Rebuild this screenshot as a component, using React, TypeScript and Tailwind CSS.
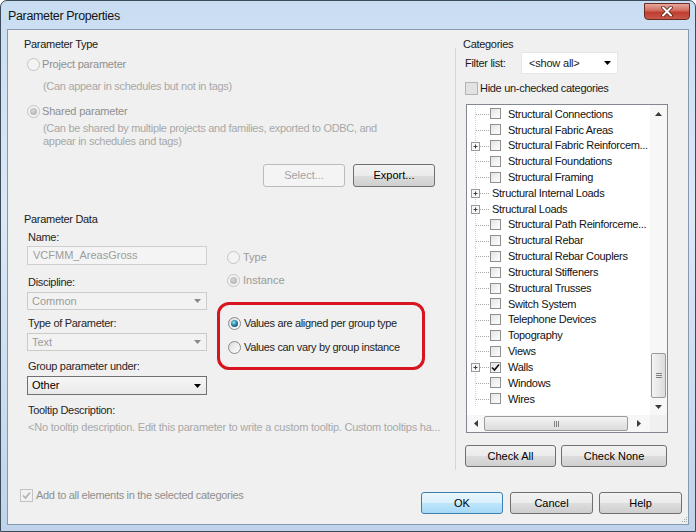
import React from "react";

type RowData = { label: string; plus?: boolean; box?: boolean; checked?: boolean };

const rows: RowData[] = [
  { label: "Structural Connections", box: true },
  { label: "Structural Fabric Areas", box: true },
  { label: "Structural Fabric Reinforcem...", plus: true, box: true },
  { label: "Structural Foundations", box: true },
  { label: "Structural Framing", box: true },
  { label: "Structural Internal Loads", plus: true },
  { label: "Structural Loads", plus: true },
  { label: "Structural Path Reinforceme...", box: true },
  { label: "Structural Rebar", box: true },
  { label: "Structural Rebar Couplers", box: true },
  { label: "Structural Stiffeners", box: true },
  { label: "Structural Trusses", box: true },
  { label: "Switch System", box: true },
  { label: "Telephone Devices", box: true },
  { label: "Topography", box: true },
  { label: "Views", box: true },
  { label: "Walls", plus: true, box: true, checked: true },
  { label: "Windows", box: true },
  { label: "Wires", box: true },
];

const Radio = ({ checked = false, disabled = false }: { checked?: boolean; disabled?: boolean }) => (
  <span
    className={`flex h-[13px] w-[13px] shrink-0 items-center justify-center rounded-full border ${
      disabled ? "border-[#c4c4c4] bg-[#f3f3f3]" : "border-[#8b8b8b] bg-[linear-gradient(135deg,#dcdcdc,#ffffff)]"
    }`}
  >
    {checked && (
      <span
        className={`h-[7px] w-[7px] rounded-full ${
          disabled
            ? "bg-[radial-gradient(circle_at_40%_40%,#d8d8d8,#a6a6a6)]"
            : "bg-[radial-gradient(circle_at_40%_35%,#8fe0f5,#1f7397_55%,#0a3a52)]"
        }`}
      />
    )}
  </span>
);

const Tick = ({ color }: { color: string }) => (
  <svg width="9" height="9" viewBox="0 0 9 9">
    <path d="M1 4.5 L3.5 7 L8 1.5" fill="none" stroke={color} strokeWidth="1.6" />
  </svg>
);

const Btn = ({ label, w, variant = "normal" }: { label: string; w: string; variant?: "normal" | "disabled" | "default" }) => {
  const look =
    variant === "disabled"
      ? "border-[#b8bcbf] bg-[#f4f4f4] text-[#a3a3a3]"
      : variant === "default"
      ? "border-[#3c7fb1] bg-[linear-gradient(to_bottom,#eaf6fd_0%,#d9f0fc_50%,#bee6fd_51%,#a7d9f5_100%)] text-black"
      : "border-[#707070] bg-[linear-gradient(to_bottom,#f2f2f2_0%,#ebebeb_50%,#dddddd_51%,#cfcfcf_100%)] text-black";
  return (
    <div className={`flex h-full items-center justify-center rounded-[3px] border text-[11px] ${look} ${w}`}>{label}</div>
  );
};

const Select = ({ value, disabled = false, h }: { value: string; disabled?: boolean; h: string }) => (
  <div
    className={`flex w-[180px] items-center justify-between border pl-[4px] pr-[5px] text-[11px] ${h} ${
      disabled ? "border-[#cbcbcb] bg-[#f2f2f2] text-[#9c9c9c]" : "border-[#707070] bg-[linear-gradient(to_bottom,#f6f6f6,#e9e9e9)] text-black"
    }`}
  >
    <span>{value}</span>
    <svg width="7" height="4" viewBox="0 0 7 4">
      <polygon points="0,0 7,0 3.5,4" fill={disabled ? "#8a8a8a" : "#000"} />
    </svg>
  </div>
);

const Gutter = ({ plus }: { plus?: boolean }) => (
  <svg width="22" height="16" className="shrink-0">
    <line x1="8.5" y1="0" x2="8.5" y2="16" stroke="#d2d2d2" strokeDasharray="1 1" />
    <line x1="9" y1="8.5" x2="22" y2="8.5" stroke="#a8a8a8" strokeDasharray="1 1" />
    {plus && (
      <g>
        <rect x="4.5" y="4.5" width="8" height="8" fill="#f8f8f8" stroke="#9a9a9a" />
        <line x1="6.5" y1="8.5" x2="10.5" y2="8.5" stroke="#404040" />
        <line x1="8.5" y1="6.5" x2="8.5" y2="10.5" stroke="#404040" />
      </g>
    )}
  </svg>
);

const TreeRow = ({ row }: { row: RowData }) => (
  <div className="flex h-[15.83px] items-center whitespace-nowrap">
    <Gutter plus={row.plus} />
    {row.box ? (
      <>
        <span className="ml-[1px] flex h-[11px] w-[11px] shrink-0 items-center justify-center border border-[#8f8f8f] bg-[linear-gradient(135deg,#e4e4e4,#ffffff)]">
          {row.checked && <Tick color="#111" />}
        </span>
        <span className="ml-[7px] text-[11px] tracking-[-0.3px] text-[#111]">{row.label}</span>
      </>
    ) : (
      <span className="ml-[3px] text-[11px] tracking-[-0.3px] text-[#111]">{row.label}</span>
    )}
  </div>
);

const Arrow = ({ dir }: { dir: "up" | "down" | "left" | "right" }) => {
  const pts = { up: "0,4 7,4 3.5,0", down: "0,0 7,0 3.5,4", left: "4,0 4,7 0,3.5", right: "0,0 0,7 4,3.5" }[dir];
  const vertical = dir === "up" || dir === "down";
  return (
    <svg width={vertical ? 7 : 4} height={vertical ? 4 : 7}>
      <polygon points={pts} fill="#3a3a3a" />
    </svg>
  );
};

const CategoryTree = () => (
  <div className="ml-[3px] mt-[9px] flex h-[329px] w-[202px] flex-col border border-[#828790] bg-white">
    <div className="flex h-[310px]">
      <div className="w-[183px] overflow-hidden pt-[1px]">
        {rows.map((r) => (
          <TreeRow key={r.label} row={r} />
        ))}
      </div>
      <div className="flex w-[17px] flex-col bg-[#f7f7f7]">
        <div className="flex h-[17px] items-center justify-center">
          <Arrow dir="up" />
        </div>
        <div className="flex-1">
          <div className="mx-[1px] mt-[231px] flex h-[45px] items-center justify-center rounded-[2px] border border-[#9a9a9a] bg-[linear-gradient(to_right,#f4f4f4,#dcdcdc)]">
            <div className="flex flex-col gap-[1px]">
              <span className="h-px w-[6px] bg-[#808080]" />
              <span className="h-px w-[6px] bg-[#808080]" />
              <span className="h-px w-[6px] bg-[#808080]" />
            </div>
          </div>
        </div>
        <div className="flex h-[17px] items-center justify-center">
          <Arrow dir="down" />
        </div>
      </div>
    </div>
    <div className="flex h-[17px]">
      <div className="flex w-[183px] bg-[#f7f7f7]">
        <div className="flex w-[17px] items-center justify-center">
          <Arrow dir="left" />
        </div>
        <div className="my-[1px] flex w-[144px] items-center justify-center rounded-[2px] border border-[#9a9a9a] bg-[linear-gradient(to_bottom,#f4f4f4,#dcdcdc)]">
          <div className="flex gap-[1px]">
            <span className="h-[6px] w-px bg-[#808080]" />
            <span className="h-[6px] w-px bg-[#808080]" />
            <span className="h-[6px] w-px bg-[#808080]" />
          </div>
        </div>
        <div className="flex flex-1 items-center justify-center">
          <Arrow dir="right" />
        </div>
      </div>
      <div className="w-[17px] bg-[#f0f0f0]" />
    </div>
  </div>
);

export default function App() {
  return (
    <div className="font-['Liberation_Sans',Arial,sans-serif] flex h-[532px] w-[696px] flex-col overflow-hidden rounded-t-[7px] border border-[#3c4a5a] bg-[linear-gradient(to_bottom,#c9ddf2,#dbe8f6_40%,#bfd4eb)]">
      {/* title bar */}
      <div className="flex h-[28px] shrink-0 items-start justify-between">
        <div className="mt-[6px] pl-[7px] text-[12.5px] tracking-[-0.35px] text-[#141414]">Parameter Properties</div>
        <div className="mr-[5px] mt-[2px] flex h-[17px] w-[46px] items-center justify-center rounded-b-[4px] border border-[#6b2a24] bg-[linear-gradient(to_bottom,#e8a79c,#d06a5d_45%,#bf3d2f_55%,#c8584a)]">
          <svg width="12" height="11" viewBox="0 0 12 11">
            <path d="M2 1.5 L10 9.5 M10 1.5 L2 9.5" stroke="#5a1f19" strokeWidth="3.6" strokeLinecap="round" />
            <path d="M2 1.5 L10 9.5 M10 1.5 L2 9.5" stroke="#ffffff" strokeWidth="2" strokeLinecap="round" />
          </svg>
        </div>
      </div>

      {/* client area */}
      <div className="ml-[6px] flex h-[496px] w-[682px] flex-col border border-[#8699b1] bg-[#f0f0f0] text-[11px]">
        <div className="flex h-[445px] items-start">
          {/* left column */}
          <div className="flex w-[447px] flex-col pl-[16px]">
            <div className="mt-[7px] h-[14px] leading-[14px] tracking-[-0.3px] text-[#1a1a1a]">Parameter Type</div>
            <div className="ml-[3px] mt-[6px] flex h-[14px] items-center gap-[2px] tracking-[-0.2px] text-[#8f8f8f]">
              <Radio disabled />
              <span>Project parameter</span>
            </div>
            <div className="ml-[19px] mt-[8px] h-[14px] leading-[14px] tracking-[-0.3px] text-[#a8a8a8]">
              (Can appear in schedules but not in tags)
            </div>
            <div className="ml-[3px] mt-[11px] flex h-[14px] items-center gap-[2px] tracking-[-0.2px] text-[#8f8f8f]">
              <Radio checked disabled />
              <span>Shared parameter</span>
            </div>
            <div className="ml-[19px] mt-[4px] leading-[13px] tracking-[-0.3px] text-[#a8a8a8]">
              <div>(Can be shared by multiple projects and families, exported to ODBC, and</div>
              <div>appear in schedules and tags)</div>
            </div>
            <div className="mt-[16px] flex h-[23px] justify-end gap-[8px] pr-[20px]">
              <Btn label="Select..." w="w-[82px]" variant="disabled" />
              <Btn label="Export..." w="w-[82px]" />
            </div>

            <div className="mt-[25px] h-[14px] leading-[14px] tracking-[-0.3px] text-[#1a1a1a]">Parameter Data</div>
            <div className="flex">
              <div className="ml-[3px] flex w-[180px] flex-col">
                <div className="ml-[1px] mt-[4px] h-[14px] leading-[14px] tracking-[-0.3px] text-[#262626]">Name:</div>
                <div className="mt-[2px] flex h-[19px] items-center border border-[#cfcfcf] bg-[#f4f4f4] pl-[5px] text-[#9c9c9c]">
                  VCFMM_AreasGross
                </div>
                <div className="ml-[1px] mt-[10px] h-[14px] leading-[14px] tracking-[-0.3px] text-[#262626]">Discipline:</div>
                <div className="mt-[3px]">
                  <Select value="Common" disabled h="h-[18px]" />
                </div>
                <div className="ml-[1px] mt-[6px] h-[14px] leading-[14px] tracking-[-0.3px] text-[#262626]">Type of Parameter:</div>
                <div className="mt-[3px]">
                  <Select value="Text" disabled h="h-[18px]" />
                </div>
                <div className="ml-[1px] mt-[8px] h-[14px] leading-[14px] tracking-[-0.3px] text-[#262626]">Group parameter under:</div>
                <div className="mt-[3px]">
                  <Select value="Other" h="h-[19px]" />
                </div>
              </div>
              <div className="ml-[10px] flex flex-col">
                <div className="ml-[10px] mt-[24px] flex h-[14px] items-center gap-[3px] text-[#9a9a9a]">
                  <Radio disabled />
                  <span>Type</span>
                </div>
                <div className="ml-[10px] mt-[9px] flex h-[14px] items-center gap-[3px] text-[#9a9a9a]">
                  <Radio checked disabled />
                  <span>Instance</span>
                </div>
                <div className="mt-[15px] flex h-[68px] w-[208px] flex-col rounded-[12px] border-[3px] border-[#d7141f] pl-[8px]">
                  <div className="mt-[11px] flex h-[14px] items-center gap-[3px] tracking-[-0.35px] text-[#1e1e1e]">
                    <Radio checked />
                    <span>Values are aligned per group type</span>
                  </div>
                  <div className="mt-[10px] flex h-[14px] items-center gap-[3px] tracking-[-0.35px] text-[#1e1e1e]">
                    <Radio />
                    <span>Values can vary by group instance</span>
                  </div>
                </div>
              </div>
            </div>
            <div className="ml-[4px] mt-[8px] h-[14px] leading-[14px] tracking-[-0.3px] text-[#262626]">Tooltip Description:</div>
            <div className="ml-[4px] mt-[3px] h-[14px] whitespace-nowrap leading-[14px] tracking-[-0.22px] text-[#a8a8a8]">
              &lt;No tooltip description. Edit this parameter to write a custom tooltip. Custom tooltips ha...
            </div>
          </div>

          {/* separator */}
          <div className="mt-[18px] h-[422px] w-px bg-[#d5d5d5]" />

          {/* right column */}
          <div className="flex flex-col pl-[7px]">
            <div className="mt-[7px] h-[14px] leading-[14px] tracking-[-0.3px] text-[#1a1a1a]">Categories</div>
            <div className="mt-[1px] flex h-[22px] items-center">
              <span className="ml-[2px] w-[56px] tracking-[-0.3px] text-[#1a1a1a]">Filter list:</span>
              <div className="flex h-[22px] w-[97px] items-center justify-between border border-[#e6e6e6] bg-white pl-[7px] pr-[6px]">
                <span className="tracking-[-0.2px] text-[#1a1a1a]">&lt;show all&gt;</span>
                <svg width="7" height="4" viewBox="0 0 7 4">
                  <polygon points="0,0 7,0 3.5,4" fill="#000" />
                </svg>
              </div>
            </div>
            <div className="ml-[2px] mt-[7px] flex h-[14px] items-center gap-[2px]">
              <span className="h-[13px] w-[13px] border border-[#b4b4b4] bg-[#e2e2e2]" />
              <span className="tracking-[-0.3px] text-[#1a1a1a]">Hide un-checked categories</span>
            </div>
            <CategoryTree />
            <div className="mt-[12px] flex h-[22px]">
              <div className="ml-[2px] h-full">
                <Btn label="Check All" w="w-[91px]" />
              </div>
              <div className="ml-[5px] h-full">
                <Btn label="Check None" w="w-[106px]" />
              </div>
            </div>
          </div>
        </div>

        {/* bottom row */}
        <div className="flex flex-1 items-start justify-between">
          <div className="ml-[12px] mt-[13px] flex h-[14px] items-center gap-[3px]">
            <span className="flex h-[13px] w-[13px] items-center justify-center border border-[#c3c3c3] bg-[#f1f1f1]">
              <Tick color="#b0b0b0" />
            </span>
            <span className="tracking-[-0.3px] text-[#8f8f8f]">Add to all elements in the selected categories</span>
          </div>
          <div className="flex h-full items-start">
            <div className="mt-[17px] flex h-[22px]">
              <Btn label="OK" w="w-[82px]" variant="default" />
              <div className="ml-[7px] h-full">
                <Btn label="Cancel" w="w-[83px]" />
              </div>
              <div className="ml-[6px] h-full">
                <Btn label="Help" w="w-[83px]" />
              </div>
            </div>
            <svg width="6" height="6" className="mb-[1px] self-end">
              <rect x="4" y="0" width="1" height="1" fill="#9aa" />
              <rect x="2" y="2" width="1" height="1" fill="#9aa" />
              <rect x="4" y="2" width="1" height="1" fill="#9aa" />
              <rect x="0" y="4" width="1" height="1" fill="#9aa" />
              <rect x="2" y="4" width="1" height="1" fill="#9aa" />
              <rect x="4" y="4" width="1" height="1" fill="#9aa" />
            </svg>
          </div>
        </div>
      </div>
    </div>
  );
}
